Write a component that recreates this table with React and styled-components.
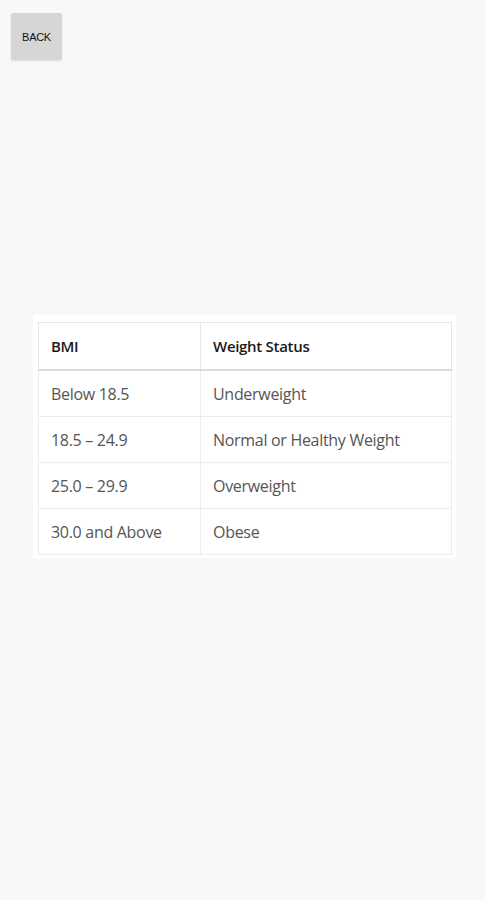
import styled, { createGlobalStyle } from "styled-components";

const GlobalStyle = createGlobalStyle`
  html, body {
    margin: 0;
    padding: 0;
    background: #f8f8f8;
  }
  body {
    font-family: "Open Sans", "Liberation Sans", sans-serif;
  }
`;

const rows = [
    { bmi: 'Below 18.5', status: 'Underweight' },
    { bmi: '18.5 – 24.9', status: 'Normal or Healthy Weight' },
    { bmi: '25.0 – 29.9', status: 'Overweight' },
    { bmi: '30.0 and Above', status: 'Obese' },
];

export default function App() {
    return (
        <>
            <GlobalStyle />
            <Page>
                <BackButton>BACK</BackButton>
                <TableCard>
                    <Table>
                        <colgroup>
                            <col style={{ width: '162px' }} />
                            <col />
                        </colgroup>
                        <thead>
                            <tr>
                                <HeadCell>BMI</HeadCell>
                                <HeadCell>Weight Status</HeadCell>
                            </tr>
                        </thead>
                        <tbody>
                            {rows.map((row) => (
                                <tr key={row.bmi}>
                                    <Cell>{row.bmi}</Cell>
                                    <Cell>{row.status}</Cell>
                                </tr>
                            ))}
                        </tbody>
                    </Table>
                </TableCard>
            </Page>
        </>
    );
}

const Page = styled.div`
  display: flex;
  flex-direction: column;
  align-items: flex-start;
  width: 485px;
  height: 900px;
  padding: 13px 0 0 11px;
  box-sizing: border-box;
`;

const BackButton = styled.button`
  width: 51px;
  height: 47px;
  padding: 0;
  border: none;
  border-radius: 2px;
  background: #d6d6d6;
  color: #111;
  font-family: "Liberation Sans", Arial, sans-serif;
  font-size: 11px;
  letter-spacing: -0.3px;
  box-shadow: 0 1px 2px rgba(0, 0, 0, 0.12);
`;

const TableCard = styled.div`
  margin: 255px 0 0 22px;
  width: 423px;
  padding: 7px 4px 3px 5px;
  box-sizing: border-box;
  background: #ffffff;
`;

const Table = styled.table`
  width: 100%;
  table-layout: fixed;
  border-collapse: collapse;
  border: 1px solid #e6e6e6;
`;

const HeadCell = styled.th`
  height: 46px;
  padding: 0 12px;
  text-align: left;
  font-size: 15px;
  line-height: 20px;
  font-weight: 600;
  color: #1a1a1a;
  border: 1px solid #e6e6e6;
  border-bottom: 2px solid #dcdcdc;
  letter-spacing: -0.3px;
`;

const Cell = styled.td`
  height: 44px;
  padding: 1px 12px 0;
  font-size: 16px;
  line-height: 20px;
  color: #555;
  border: 1px solid #ececec;
  letter-spacing: -0.3px;
  white-space: nowrap;
`;
